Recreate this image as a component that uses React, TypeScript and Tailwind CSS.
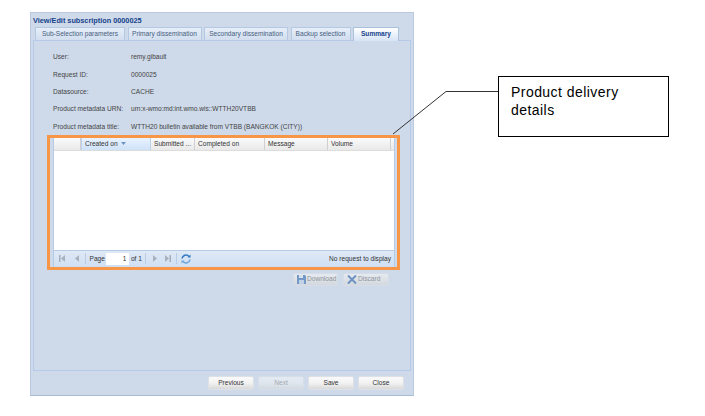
import React from 'react';

const FIELDS = [
  ['User:', 'remy.gibault'],
  ['Request ID:', '0000025'],
  ['Datasource:', 'CACHE'],
  ['Product metadata URN:', 'urn:x-wmo:md:int.wmo.wis::WTTH20VTBB'],
  ['Product metadata title:', 'WTTH20 bulletin available from VTBB (BANGKOK (CITY))'],
];

const TABS = [
  { label: 'Sub-Selection parameters', width: 'w-[90px]' },
  { label: 'Primary dissemination', width: 'w-[74px]' },
  { label: 'Secondary dissemination', width: 'w-[84px]' },
  { label: 'Backup selection', width: 'w-[60px]' },
];

const COLUMNS = [
  { label: '', width: 'w-[27px]' },
  { label: 'Submitted ...', width: 'w-[44px]' },
  { label: 'Completed on', width: 'w-[70px]' },
  { label: 'Message', width: 'w-[63px]' },
  { label: 'Volume', width: 'w-[63px]' },
];

const headCell = 'h-full flex items-center pl-[3px] border-r border-[#d0d0d0] shrink-0 truncate';

const FooterButton: React.FC<{ label: string; disabled?: boolean }> = ({ label, disabled }) => (
  <button className={`w-[46px] h-[14px] flex items-center justify-center rounded-[2px] border border-[#dde0e4] bg-gradient-to-b from-[#fafafa] via-[#f2f2f2] to-[#d9d9d9] ${disabled ? 'opacity-50 text-[#777]' : 'text-[#333]'}`}>
    {label}
  </button>
);

const PagerIcon: React.FC<{ dir: 'first' | 'prev' | 'next' | 'last' }> = ({ dir }) => {
  const flip = dir === 'next' || dir === 'last';
  const bar = dir === 'first' || dir === 'last';
  return (
    <svg width="9" height="9" viewBox="0 0 9 9" className={flip ? 'scale-x-[-1]' : ''}>
      {bar && <rect x="1" y="1" width="1.5" height="7" fill="#a4adb8" />}
      <path d="M7 1 L3 4.5 L7 8 Z" fill="#a9b2bc" />
    </svg>
  );
};

export default function App() {
  return (
    <div className="relative w-[705px] h-[416px] bg-white overflow-hidden font-['Liberation_Sans',Arial,sans-serif] text-[6.6px] leading-none text-[#333]">
      <div className="absolute left-[30px] top-[12px] w-[384px] h-[384px] bg-[#cedaea] border border-[#b9c9df] border-b-[#a8bbd4] flex flex-col">
        <div className="h-[14px] pl-[2px] pt-[4px] font-bold text-[7.3px] text-[#15428b] shrink-0">View/Edit subscription 0000025</div>

        <div className="h-[14px] mx-[2px] flex items-end gap-[2.5px] pl-[2px] border-b border-[#b5c9e8] shrink-0">
          {TABS.map(tab => (
            <div key={tab.label} className={`${tab.width} h-[13px] flex items-center justify-center bg-gradient-to-b from-[#e6eef8] to-[#d2deef] border border-b-0 border-[#b4c8e2] text-[#47607f] rounded-t-[1px] whitespace-nowrap`}>
              {tab.label}
            </div>
          ))}
          <div className="w-[46px] h-[14px] -mb-px flex items-center justify-center bg-gradient-to-b from-[#ffffff] to-[#d6e4f6] border border-b-0 border-[#a9c0de] font-bold text-[#15428b] rounded-t-[1px]">
            Summary
          </div>
        </div>

        <div className="mx-[2px] h-[330px] border-x border-b border-[#b5c9e8] shrink-0 pt-[8px] pl-[19px] flex flex-col">
          {FIELDS.map(([label, value]) => (
            <div key={label} className="h-[17.3px] flex items-center shrink-0 text-[#444]">
              <span className="w-[78px] shrink-0">{label}</span>
              <span>{value}</span>
            </div>
          ))}

          <div className="-ml-[6px] -mt-[0.5px] w-[353px] h-[135px] border-[3px] border-[#f79646] pl-[3px] shrink-0">
            <div className="w-[342px] h-[129px] border-x border-[#b5cbe6] flex flex-col bg-white">
              <div className="h-[13px] flex items-stretch bg-gradient-to-b from-[#fafafa] to-[#e9e9e9] border-b border-[#dcdcdc] shrink-0">
                <div className={`${COLUMNS[0].width} ${headCell}`} />
                <div className="w-[70px] h-full flex items-center gap-[3px] pl-[3px] bg-gradient-to-b from-[#e9f3ff] to-[#cfe2f8] border-x border-[#bcd2ec] shrink-0">
                  Created on
                  <svg width="5" height="3" viewBox="0 0 5 3"><path d="M0 0 H5 L2.5 3 Z" fill="#6f93c5" /></svg>
                </div>
                {COLUMNS.slice(1).map(col => (
                  <div key={col.label} className={`${col.width} ${headCell}`}>{col.label}</div>
                ))}
              </div>
              <div className="flex-1 bg-white" />
              <div className="h-[17px] flex items-center pl-[4px] pr-[3px] bg-gradient-to-b from-[#dfe9f6] to-[#cfdff3] border-t border-[#b5cbe6] shrink-0">
                <PagerIcon dir="first" />
                <span className="w-[5px]" />
                <PagerIcon dir="prev" />
                <span className="ml-[3.5px] mr-[4px] h-[11px] border-l border-[#b9cce4]" />
                <span>Page</span>
                <input readOnly value="1" className="ml-[1.5px] w-[23px] h-[12px] bg-white text-right pr-[3px] text-[6.6px] text-[#333] outline-none" />
                <span className="ml-[1.5px]">of 1</span>
                <span className="ml-[3.5px] mr-[4.5px] h-[11px] border-l border-[#b9cce4]" />
                <PagerIcon dir="next" />
                <span className="w-[3px]" />
                <PagerIcon dir="last" />
                <span className="ml-[4.5px] mr-[4px] h-[11px] border-l border-[#b9cce4]" />
                <svg width="10" height="10" viewBox="0 0 10 10" fill="none">
                  <path d="M1 4.5 A4 4 0 0 1 8 2.5" stroke="#2f78c4" strokeWidth="1.6" />
                  <path d="M9 5.5 A4 4 0 0 1 2 7.5" stroke="#6ea5dd" strokeWidth="1.6" />
                  <path d="M6.5 3.5 H9.5 V0.5 Z" fill="#2f78c4" />
                  <path d="M3.5 6.5 H0.5 V9.5 Z" fill="#6ea5dd" />
                </svg>
                <span className="ml-auto">No request to display</span>
              </div>
            </div>
          </div>

          <div className="mt-[3px] ml-[240px] flex gap-[5px] opacity-60 shrink-0 text-[#666]">
            <button className="w-[45px] h-[13px] flex items-center gap-[1px] pl-[3px] rounded-[2px] border border-[#dde0e4] bg-gradient-to-b from-[#f5f5f5] to-[#d8d8d8]">
              <svg width="9" height="9" viewBox="0 0 9 9"><path d="M0 0 H8 L9 1 V9 H0 Z" fill="#3a6fb0" /><rect x="2" y="0" width="4" height="3" fill="#dfe8f3" /><rect x="2" y="5" width="5" height="4" fill="#b9cde4" /></svg>
              Download
            </button>
            <button className="w-[46px] h-[13px] flex items-center gap-[1px] pl-[3px] rounded-[2px] border border-[#dde0e4] bg-gradient-to-b from-[#f5f5f5] to-[#d8d8d8]">
              <svg width="10" height="9" viewBox="0 0 10 9"><path d="M1 0.5 L9 8.5 M9 0.5 L1 8.5" stroke="#2c62a8" strokeWidth="2" /></svg>
              Discard
            </button>
          </div>
        </div>

        <div className="flex-1 flex items-start justify-end gap-[4px] pr-[9px] pt-[5px]">
          <FooterButton label="Previous" />
          <FooterButton label="Next" disabled />
          <FooterButton label="Save" />
          <FooterButton label="Close" />
        </div>
      </div>

      <svg className="absolute left-0 top-0" width="705" height="416" fill="none">
        <path d="M393 134 L446 91.5 H498" stroke="#333" strokeWidth="1" />
      </svg>
      <div className="absolute left-[498px] top-[76px] w-[171px] h-[61px] bg-white border border-black pl-[12px] pt-[7px] text-[14px] leading-[17.5px] tracking-[0.45px] text-black">
        Product delivery<br />details
      </div>
    </div>
  );
}
